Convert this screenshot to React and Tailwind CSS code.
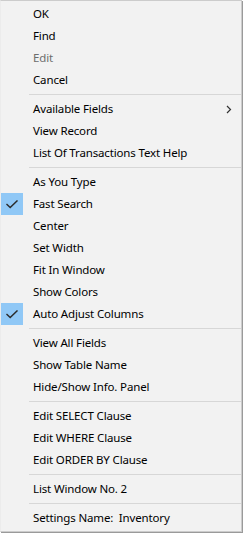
import React from "react";

const Check = () => (
  <svg width="12" height="9" viewBox="0 0 12 9" fill="none">
    <path d="M1 4.5 L4.2 7.5 L11 1" stroke="#2b2b2b" strokeWidth="1.5" strokeLinecap="square" />
  </svg>
);

const Chevron = () => (
  <svg width="6" height="9" viewBox="0 0 6 9" fill="none">
    <path d="M1 1 L4.5 4.5 L1 8" stroke="#333" strokeWidth="1.2" />
  </svg>
);

const groups = [
  [{ t: "OK" }, { t: "Find" }, { t: "Edit", d: true }, { t: "Cancel" }],
  [{ t: "Available Fields", sub: true }, { t: "View Record" }, { t: "List Of Transactions Text Help" }],
  [
    { t: "As You Type" },
    { t: "Fast Search", c: true },
    { t: "Center" },
    { t: "Set Width" },
    { t: "Fit In Window" },
    { t: "Show Colors" },
    { t: "Auto Adjust Columns", c: true },
  ],
  [{ t: "View All Fields" }, { t: "Show Table Name" }, { t: "Hide/Show Info. Panel" }],
  [{ t: "Edit SELECT Clause" }, { t: "Edit WHERE Clause" }, { t: "Edit ORDER BY Clause" }],
  [{ t: "List Window No. 2" }],
  [{ t: "Settings Name:  Inventory" }],
];

function Row({ item }) {
  return (
    <div className="flex h-[22px] items-center">
      <div className={`flex h-[22px] w-[22px] items-center justify-center ${item.c ? "bg-[#90c8f6]" : ""}`}>
        {item.c && <Check />}
      </div>
      <span
        className={`ml-[10px] whitespace-pre text-[11.5px] leading-none tracking-[-0.15px] ${item.d ? "text-[#6d6d6d]" : "text-black"}`}
      >
        {item.t}
      </span>
      {item.sub && (
        <span className="ml-auto mr-[9px] flex items-center">
          <Chevron />
        </span>
      )}
    </div>
  );
}

export default function App() {
  return (
    <div className="h-[533px] w-[243px] bg-white" style={{ fontFamily: '"Segoe UI", "Noto Sans", sans-serif' }}>
      <div className="w-[242px] border-t border-r border-b border-[#cccccc] border-l border-l-[#ececec] bg-[#f2f2f2] pt-[2px] pb-[2px] shadow-[1px_1px_0_#9a9a9a]">
        {groups.map((g, gi) => (
          <React.Fragment key={gi}>
            {gi > 0 && (
              <div className="flex h-[7px] items-center">
                <div className="ml-[28px] h-px flex-1 bg-[#d7d7d7]" />
              </div>
            )}
            {g.map((item) => (
              <Row key={item.t} item={item} />
            ))}
          </React.Fragment>
        ))}
      </div>
    </div>
  );
}
